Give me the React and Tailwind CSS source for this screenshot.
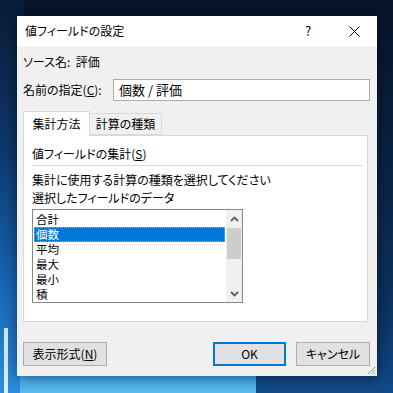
import React from 'react';

const ITEMS = ['合計', '個数', '平均', '最大', '最小', '積'];

function Chevron({ down = false }) {
  return (
    <svg width="9" height="6" viewBox="0 0 9 6" className={down ? 'rotate-180' : ''}>
      <path d="M1 5 L4.5 1.5 L8 5" fill="none" stroke="#606060" strokeWidth="1.8" />
    </svg>
  );
}

function Btn({ children, primary = false, className = '' }) {
  const border = primary ? 'border-2 border-[#0078d7]' : 'border border-[#adadad]';
  return (
    <div className={`h-[24px] flex items-center justify-center bg-[#e1e1e1] ${border} ${className}`}>
      {children}
    </div>
  );
}

export default function App() {
  return (
    <div className="relative w-[393px] h-[393px] overflow-hidden bg-[#0a1a33] font-['Noto_Sans_CJK_JP',sans-serif] [font-feature-settings:'palt'] text-[12px] leading-[18px] text-black">
      {/* desktop wallpaper */}
      <div className="absolute inset-0 bg-[linear-gradient(180deg,#07142a_0%,#0a2445_45%,#0d3463_80%,#124a8a_100%)]" />
      <div className="absolute left-0 top-0 w-[24px] h-full bg-[linear-gradient(180deg,#0a1c38_0%,#0e3a70_40%,#1767b8_72%,#2a8ee0_100%)]" />
      <div className="absolute left-[4px] top-[328px] w-[4px] h-[65px] bg-[#d8ecfa]" />
      <div className="absolute left-[20px] top-[370px] w-[236px] h-[23px] bg-[linear-gradient(180deg,#3a9ee6,#5cbcf0)]" />

      {/* dialog window */}
      <div className="absolute left-[17px] top-[16px] w-[360px] h-[360px] flex flex-col bg-[#f0f0f0] shadow-[0_0_14px_rgba(0,0,0,0.55)]">
        <div className="h-[30px] shrink-0 bg-white flex items-center pl-[8px]">
          <span className="flex-1">値フィールドの設定</span>
          <span className="w-[46px] h-full flex items-center justify-center text-[13px]">?</span>
          <span className="w-[46px] h-full flex items-center justify-center">
            <svg width="11" height="11" viewBox="0 0 11 11">
              <path d="M0.5 0.5 L10.5 10.5 M10.5 0.5 L0.5 10.5" stroke="#000" strokeWidth="1" />
            </svg>
          </span>
        </div>

        <div className="flex-1 flex flex-col pl-[6px] pr-[7px]">
          <div className="h-[22px] mt-[5px] flex items-center">ソース名:&nbsp;&nbsp;評価</div>

          <div className="h-[22px] mt-[6px] flex items-center">
            <span className="w-[90px]">名前の指定(<span className="underline">C</span>):</span>
            <div className="flex-1 h-full bg-white border border-[#adadad] flex items-center pl-[5px] text-[13px]">
              個数 / 評価
            </div>
          </div>

          {/* tabs */}
          <div className="mt-[10px] h-[24px] flex items-end relative z-10">
            <div className="w-[67px] h-[25px] -mb-px bg-white border border-[#d9d9d9] border-b-white flex items-center justify-center">
              集計方法
            </div>
            <div className="w-[72px] h-[22px] bg-[#f0f0f0] border border-l-0 border-[#d9d9d9] flex items-center justify-center">
              計算の種類
            </div>
          </div>

          <div className="w-[345px] h-[187px] bg-white border border-[#d9d9d9] pl-[8px] pt-[9px] flex flex-col">
            <div className="h-[18px]">値フィールドの集計(<span className="underline">S</span>)</div>
            <div className="mt-[2px] w-[330px] h-px bg-[#d7d7d7]" />
            <div className="mt-[5px] h-[18px]">集計に使用する計算の種類を選択してください</div>
            <div className="h-[18px]">選択したフィールドのデータ</div>

            <div className="mt-[2px] w-[211px] h-[94px] border border-[#828790] flex">
              <div className="flex-1 pt-[2px] px-px">
                {ITEMS.map((it, i) => (
                  <div
                    key={it}
                    className={`h-[15px] flex items-center text-[11.5px] leading-[13px] pl-[2px] ${
                      i === 1 ? 'bg-[#0078d7] text-white border border-dotted border-[#f0a030] pl-px' : ''
                    }`}
                  >
                    {it}
                  </div>
                ))}
              </div>
              <div className="w-[16px] bg-[#f0f0f0] flex flex-col">
                <div className="h-[18px] flex items-center justify-center"><Chevron /></div>
                <div className="mx-px h-[31px] bg-[#cdcdcd]" />
                <div className="flex-1" />
                <div className="h-[17px] flex items-center justify-center"><Chevron down /></div>
              </div>
            </div>
          </div>

          <div className="mt-[20px] flex items-center">
            <Btn className="w-[84px]">表示形式(<span className="underline">N</span>)</Btn>
            <div className="flex-1" />
            <Btn primary className="w-[73px]">OK</Btn>
            <Btn className="w-[74px] ml-[10px]">キャンセル</Btn>
          </div>
        </div>

        <svg width="10" height="10" viewBox="0 0 10 10" className="absolute right-[1px] bottom-[1px]">
          <path d="M9 2 L2 9 M9 5 L5 9 M9 8 L8 9" stroke="#a0a0a0" strokeWidth="1" />
        </svg>
      </div>
    </div>
  );
}
